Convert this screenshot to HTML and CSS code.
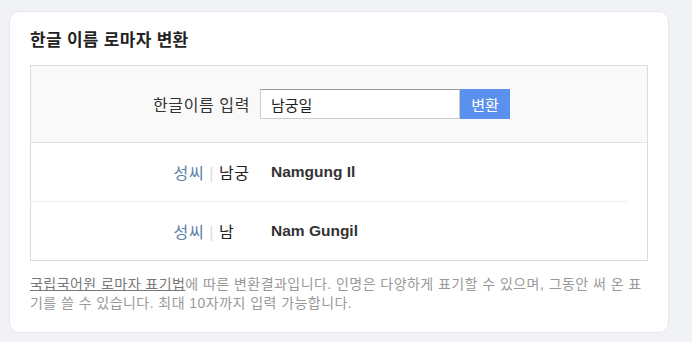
FILE: index.html
```html
<!DOCTYPE html>
<html lang="ko">
<head>
    <meta charset="UTF-8">
    <meta name="viewport" content="width=device-width, initial-scale=1.0">
    <title>한글 이름 로마자 변환</title>
    <link rel="stylesheet" href="styles.css">
</head>
<body>
    <div class="card">
        <h2 class="card-title">한글 이름 로마자 변환</h2>
        <div class="converter">
            <div class="input-row">
                <label class="row-label" for="name-input">한글이름 입력</label>
                <div class="input-group">
                    <input type="text" id="name-input" value="남궁일">
                    <button>변환</button>
                </div>
            </div>
            <div class="results">
                <div class="result-row">
                    <div class="row-label"><span class="key">성씨</span><span class="bar">|</span><span class="surname">남궁</span></div>
                    <div class="roman">Namgung Il</div>
                </div>
                <div class="result-row">
                    <div class="row-label"><span class="key">성씨</span><span class="bar">|</span><span class="surname">남</span></div>
                    <div class="roman">Nam Gungil</div>
                </div>
            </div>
        </div>
        <p class="note"><a href="#">국립국어원 로마자 표기법</a>에 따른 변환결과입니다. 인명은 다양하게 표기할 수 있으며, 그동안 써 온 표기를 쓸 수 있습니다. 최대 10자까지 입력 가능합니다.</p>
    </div>
</body>
</html>
```

FILE: styles.css
```css
body {
    margin: 0;
    padding: 11px 0 0 9px;
    background-color: #f1f2f6;
    font-family: "Liberation Sans", "Noto Sans CJK KR", sans-serif;
    color: #222;
}
.card {
    box-sizing: border-box;
    width: 660px;
    height: 322px;
    padding: 17px 20px 20px;
    background-color: #fff;
    border: 1px solid #e6e8ec;
    border-radius: 10px;
}
.card-title {
    margin: 0 0 12px;
    font-size: 17px;
    font-weight: bold;
    line-height: 24px;
    letter-spacing: 0.3px;
    color: #222;
}
.converter {
    border: 1px solid #dcdcdc;
}
.input-row {
    display: flex;
    align-items: center;
    height: 76px;
    background-color: #f9f9f9;
    border-bottom: 1px solid #e2e2e2;
}
.row-label {
    width: 219px;
    flex-shrink: 0;
    text-align: right;
    white-space: nowrap;
    font-size: 16px;
    letter-spacing: 0.6px;
    color: #333;
}
.input-group {
    display: flex;
    margin-left: 10px;
}
.input-group input {
    box-sizing: border-box;
    width: 200px;
    height: 30px;
    padding: 0 10px;
    border: 1px solid #ccc;
    border-top-color: #999;
    font-family: inherit;
    font-size: 15px;
    color: #222;
    outline: none;
}
.input-group button {
    width: 50px;
    height: 30px;
    border: none;
    background-color: #5b91ee;
    color: #fff;
    font-family: inherit;
    font-size: 15px;
    cursor: pointer;
}
.result-row {
    display: flex;
    align-items: center;
    height: 58px;
    margin-right: 20px;
}
.result-row + .result-row {
    border-top: 1px solid #eee;
}
.key {
    color: #5a7ea8;
}
.bar {
    margin: 0 5px;
    color: #ddd;
}
.surname {
    display: inline-block;
    width: 31px;
    text-align: left;
    color: #222;
}
.roman {
    padding-left: 21px;
    font-size: 15.5px;
    font-weight: bold;
    color: #333;
}
.note {
    margin: 14px 0 0;
    font-size: 14px;
    line-height: 19px;
    letter-spacing: 0.45px;
    color: #999;
}
.note a {
    color: #777;
    text-decoration: underline;
}
```
